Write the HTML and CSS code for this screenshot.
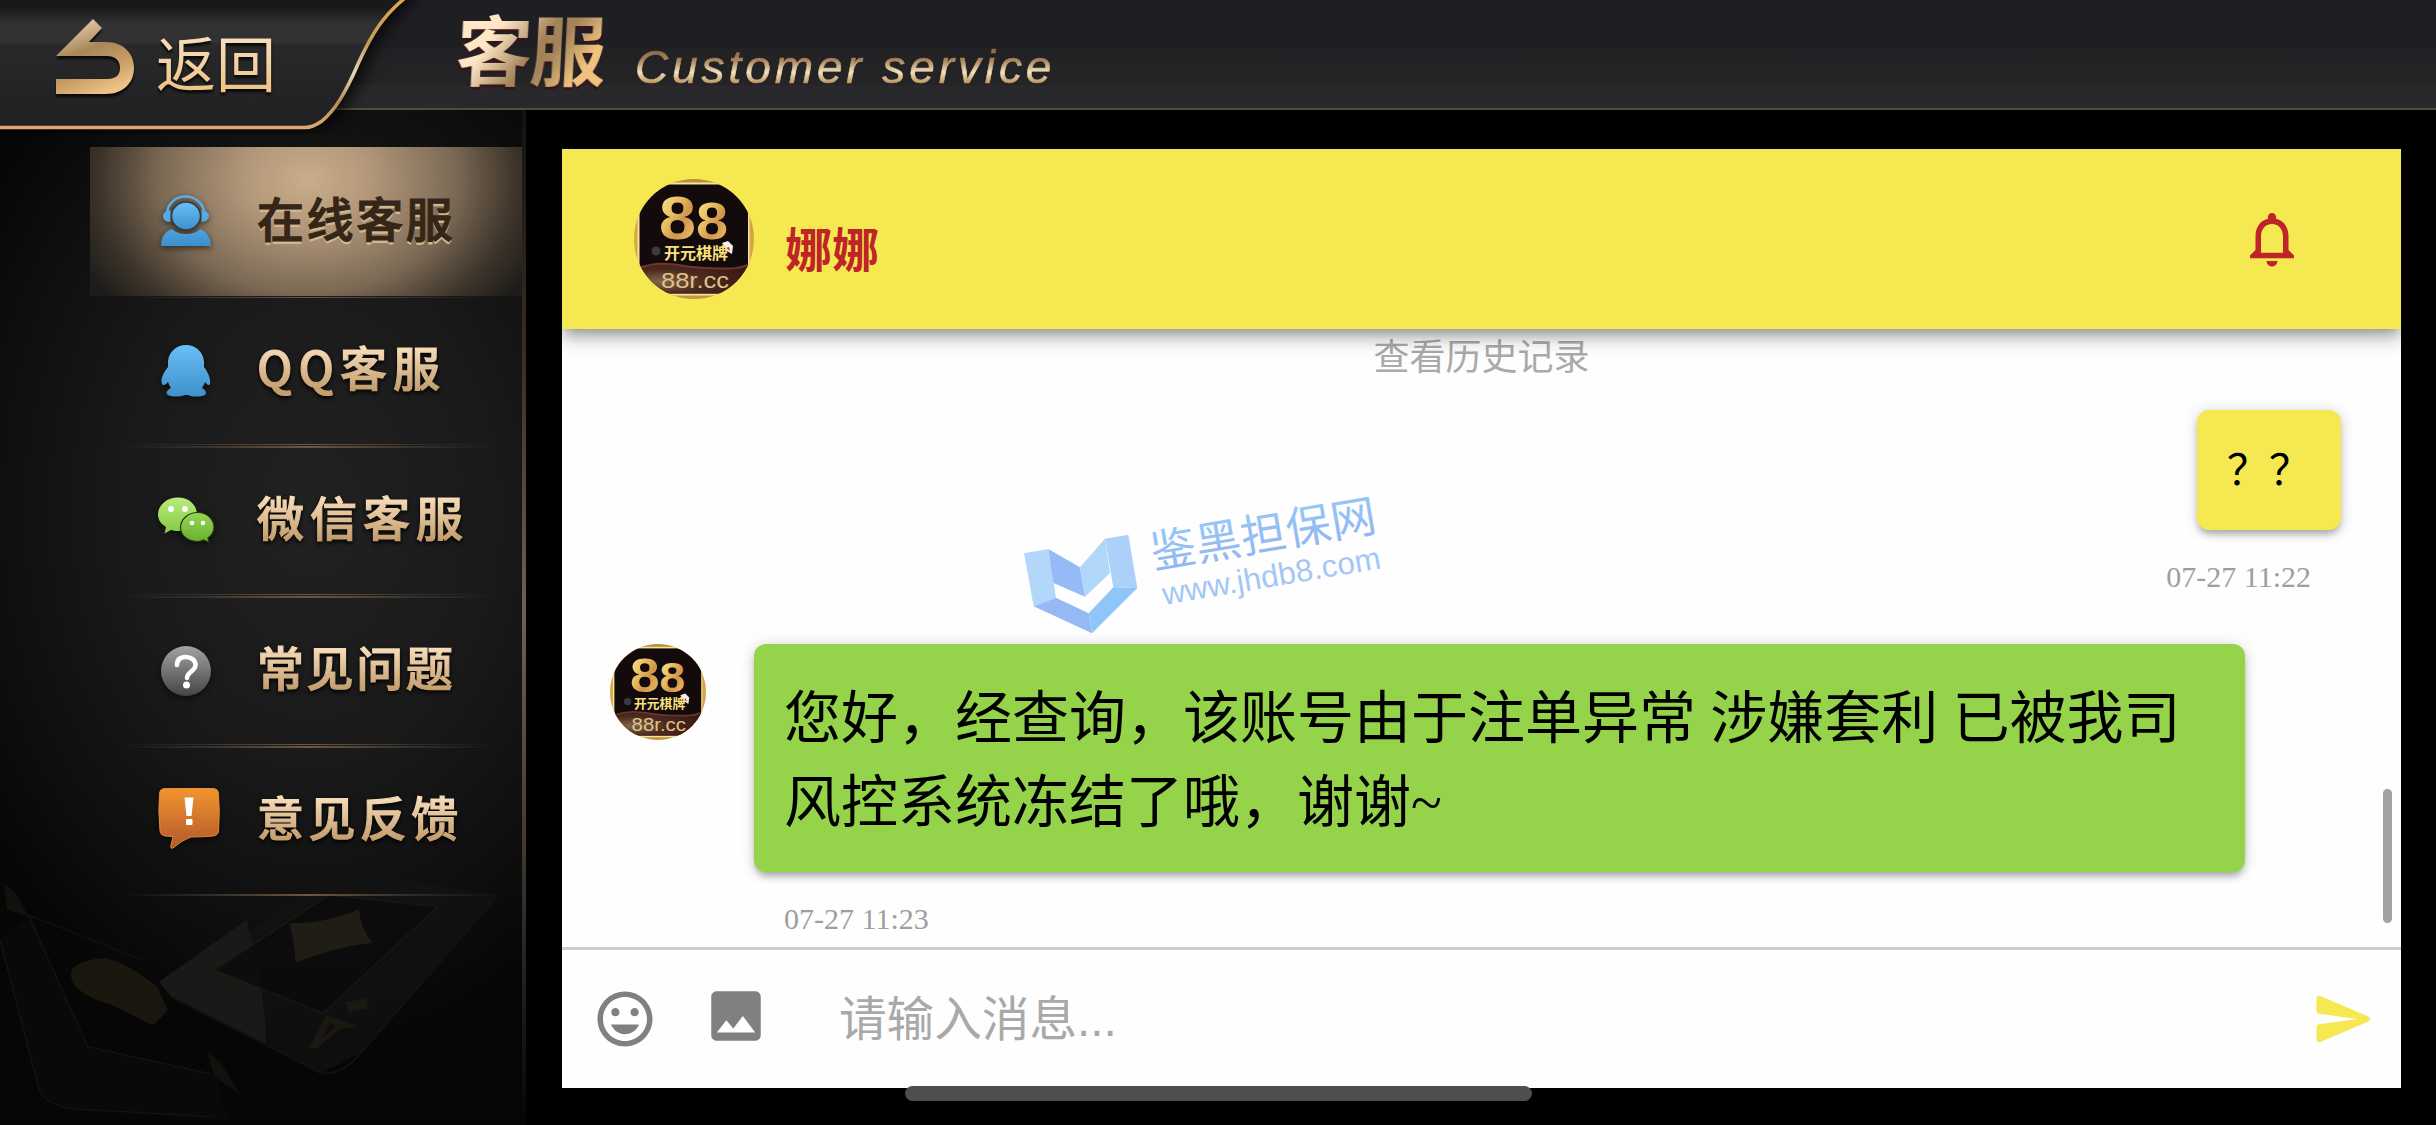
FILE: index.html
```
<!DOCTYPE html>
<html lang="zh-CN">
<head>
    <meta charset="UTF-8">
    <meta name="viewport" content="width=device-width, initial-scale=1.0">
    <title>客服</title>
    <link rel="stylesheet" href="styles.css">
</head>
<body>
    <!-- 公共渐变和头像 -->
    <svg class="defs" width="0" height="0">
        <defs>
            <linearGradient id="gold" x1="0" y1="0" x2="1" y2="1">
                <stop offset="0" stop-color="#fff0a0"/>
                <stop offset=".4" stop-color="#e8bd60"/>
                <stop offset=".6" stop-color="#d0954c"/>
                <stop offset="1" stop-color="#f6d074"/>
            </linearGradient>
            <linearGradient id="frame" x1="0" y1="0" x2="0" y2="1">
                <stop offset="0" stop-color="#b98d3a"/>
                <stop offset=".5" stop-color="#d9a846"/>
                <stop offset="1" stop-color="#c2963f"/>
            </linearGradient>
            <linearGradient id="blue" x1="0" y1="0" x2="0" y2="1">
                <stop offset="0" stop-color="#69bff7"/>
                <stop offset="1" stop-color="#3f8fcb"/>
            </linearGradient>
            <linearGradient id="blueBody" x1="0" y1="0" x2="0" y2="1">
                <stop offset="0" stop-color="#4fa3de"/>
                <stop offset="1" stop-color="#3d8ecb"/>
            </linearGradient>
            <radialGradient id="ground" cx=".2" cy=".6" r=".8">
                <stop offset="0" stop-color="#80674a"/>
                <stop offset=".5" stop-color="#4c2a1e"/>
                <stop offset="1" stop-color="#3a1b14"/>
            </radialGradient>
            <clipPath id="round"><circle cx="60" cy="60" r="60"/></clipPath>
        </defs>
        <symbol id="avatar" viewBox="0 0 120 120">
            <g clip-path="url(#round)">
                <rect width="120" height="120" fill="url(#frame)"/>
                <rect x="3.5" y="3.5" width="112" height="113" fill="#f8e39a"/>
                <rect x="5.5" y="5.5" width="108.5" height="109" fill="#120a0b"/>
                <path d="M5 89C30 80 45 88 72 89S104 90 114 86V114.500H5z" fill="url(#ground)"/>
                <path d="M5 89C30 80 45 88 72 89S104 90 114 86" fill="none" stroke="#71352f" stroke-width="2"/>
                <text class="av-num" x="25" y="59.500" font-size="61" textLength="37" lengthAdjust="spacingAndGlyphs" fill="url(#gold)">8</text>
                <text class="av-num" x="62" y="59.500" font-size="52" textLength="32" lengthAdjust="spacingAndGlyphs" fill="url(#gold)">8</text>
                <path d="M88 64l6-2 5 5-1 8-5-3z" fill="#f4f1ee"/>
                <path d="M92 69l3-1 1 4z" fill="#c33"/>
                <circle cx="22" cy="72" r="4.500" fill="#3b3b3d"/>
                <text class="av-name" x="30" y="80" font-size="16" fill="#fbe27d">开元棋牌</text>
                <text class="av-site" x="27" y="109" font-size="22" textLength="68" lengthAdjust="spacingAndGlyphs" fill="#e0c38a">88r.cc</text>
            </g>
        </symbol>
    </svg>

    <div class="app">
        <header class="topbar">
            <a class="back">
                <svg class="back-shape" width="430" height="134" viewBox="0 0 430 134">
                    <defs>
                        <linearGradient id="tab" x1="0" y1="0" x2="0" y2="1">
                            <stop offset="0" stop-color="#19191b"/>
                            <stop offset=".19" stop-color="#19191b"/>
                            <stop offset=".3" stop-color="#323233"/>
                            <stop offset=".42" stop-color="#323233"/>
                            <stop offset=".44" stop-color="#29292b"/>
                            <stop offset="1" stop-color="#202022"/>
                        </linearGradient>
                        <linearGradient id="tabLine" x1="0" y1="0" x2="0" y2="1">
                            <stop offset="0" stop-color="#d8a954"/>
                            <stop offset=".35" stop-color="#c79a58"/>
                            <stop offset=".58" stop-color="#e8d3b8"/>
                            <stop offset=".8" stop-color="#b98c5a"/>
                            <stop offset="1" stop-color="#dfa873"/>
                        </linearGradient>
                    </defs>
                    <path class="back-fill" d="M-20 127.500H304Q312 128 322 121C335 110 345 94 358 64C372 33 384 15 405-2V-20H-20z" fill="url(#tab)"/>
                    <path d="M-5 127.500H304Q312 128 322 121C335 110 345 94 358 64C372 33 384 15 405-2" fill="none" stroke="url(#tabLine)" stroke-width="3.500"/>
                </svg>
                <svg class="back-arrow" width="78" height="76" viewBox="0 0 78 76">
                    <defs>
                        <linearGradient id="arrow" x1=".2" y1="0" x2=".6" y2="1">
                            <stop offset="0" stop-color="#f0d6b8"/>
                            <stop offset=".42" stop-color="#a88758"/>
                            <stop offset=".7" stop-color="#c79c63"/>
                            <stop offset="1" stop-color="#efc487"/>
                        </linearGradient>
                    </defs>
                    <path d="M0 37L37 0L46 9L33 23H50C67 23 78 34 78 49S67 75 50 75H0V60H51C60 60 64 56 64 49S60 37 51 37z" fill="url(#arrow)"/>
                </svg>
                <span class="back-text gold-text">返回</span>
            </a>
            <h1 class="title">客服</h1>
            <span class="subtitle">Customer service</span>
        </header>

        <div class="main">
            <aside class="sidebar">
                <!-- 底部扑克牌暗纹 -->
                <svg class="cards" width="560" height="505" viewBox="0 0 1568 1515" preserveAspectRatio="none">
                    <path d="M480 1090L950 750L1395 825L1010 1300L900 1360L480 1130z" fill="#141414" opacity=".6"/>
                    <path d="M445 1085L690 900Q740 1080 745 1270L480 1130z" fill="#191918"/>
                    <path d="M600 1050L920 825L1225 860L905 1180z" fill="#0b0b0b" opacity=".8" stroke="#1d1a14" stroke-width="4"/>
                    <path d="M480 1130L900 1360Q960 1365 1010 1300L1395 825" fill="none" stroke="#15120f" stroke-width="5"/>
                    <path d="M810 910Q920 910 1005 868Q1010 930 1043 968Q940 980 828 1028Q825 960 810 910z" fill="#1f1d16"/>
                    <path d="M962 1145Q1000 1145 1028 1130Q1025 1155 1036 1168Q1000 1165 978 1180Q975 1160 962 1145z" fill="#1b1811"/>
                    <path d="M915 1185L1000 1218L950 1228L885 1287L866 1280zM925 1205L905 1250L940 1222z" fill="#1b1811" fill-rule="evenodd"/>
                    <path d="M0 960L80 885L240 1280L600 1365L640 1500L180 1470L110 1410z" fill="#0b0b0b" opacity=".7"/>
                    <path d="M0 960L110 1410Q130 1450 190 1465L590 1490M80 885L245 1280L590 1362M80 885L400 1020" fill="none" stroke="#17130d" stroke-width="4"/>
                    <path d="M200 1050Q230 1015 300 1015C370 1040 400 1070 440 1100L470 1170L430 1215C370 1190 330 1160 300 1150C240 1130 190 1100 200 1050z" fill="#1a170f"/>
                    <path d="M10 790L45 820L80 890L20 870zM580 1295L620 1330L670 1420L600 1370z" fill="#12100c"/>
                </svg>
                <nav class="menu">
                    <a class="item active">
                        <svg class="icon" width="60" height="60" viewBox="0 0 60 60">
                            <path d="M11 22C12 12 20 5.500 29.500 5.500S47 12 48.500 22" fill="none" stroke="#58aee8" stroke-width="2.500"/>
                            <path d="M14.500 19V31C9 31 7 28 7 25S10 19.500 14.500 19zM45.500 19V31C50 31 53 28 53 25S50 19.500 45.500 19z" fill="#55aae4"/>
                            <ellipse cx="30" cy="25" rx="14.500" ry="14" fill="url(#blue)" stroke="#3b3a38" stroke-width="1.500"/>
                            <path d="M5 55C5 45 10 40 16 38C20 42 25 43 30 43S40 42 44 38C50 40 55 46 55 55z" fill="url(#blueBody)"/>
                        </svg>
                        <span class="label">在线客服</span>
                    </a>
                    <a class="item wide">
                        <svg class="icon" width="60" height="60" viewBox="0 0 60 60">
                            <path d="M30 4C40 4 47 11 48 20V26C52 31 55 38 54 43C53 45 51 44 49 41C48 44 47 45 46 47C50 49 51 52 49 54C44 56 36 56 32 54H29C24 56 16 56 12 54C9 52 11 49 15 47C14 45 13 44 12 41C10 44 7 45 6 43C4 38 8 31 12 26V20C13 11 20 4 30 4z" fill="url(#blue)"/>
                        </svg>
                        <span class="label">QQ客服</span>
                    </a>
                    <a class="item wide">
                        <svg class="icon" width="60" height="60" viewBox="0 0 60 60">
                            <defs>
                                <linearGradient id="g1" x1="0" y1="0" x2="0" y2="1"><stop offset="0" stop-color="#b9ec7c"/><stop offset="1" stop-color="#84c83f"/></linearGradient>
                                <linearGradient id="g2" x1="0" y1="0" x2="0" y2="1"><stop offset="0" stop-color="#96d855"/><stop offset="1" stop-color="#6aac2d"/></linearGradient>
                            </defs>
                            <path d="M22 6.500C33 6.500 41 14 41 23.500S33 40 22 40C19 40 17 39.500 15 39L8.500 42.500L10 36C5 33 2 29 2 23.500C2 14 11 6.500 22 6.500z" fill="url(#g1)"/>
                            <path d="M41.500 21.500C51 21.500 58 28 58 36.500C58 41 55.500 44.500 52 47L53 51.500L47.500 49C45.500 50 43.500 50.500 41.500 50.500C32 50.500 24.500 44.500 24.500 36.500S32 21.500 41.500 21.500z" fill="url(#g2)" stroke="#24351a" stroke-width="1.200"/>
                            <g fill="#fff"><circle cx="15" cy="18" r="3"/><circle cx="29" cy="18" r="3"/><circle cx="36" cy="32" r="2.300"/><circle cx="47" cy="32" r="2.300"/></g>
                        </svg>
                        <span class="label">微信客服</span>
                    </a>
                    <a class="item">
                        <svg class="icon" width="60" height="60" viewBox="0 0 60 60">
                            <defs>
                                <linearGradient id="grey" x1="0" y1="0" x2="0" y2="1"><stop offset="0" stop-color="#a2a2a2"/><stop offset="1" stop-color="#454545"/></linearGradient>
                            </defs>
                            <circle cx="30" cy="30" r="25" fill="url(#grey)"/>
                            <path d="M21 24C21 18 25 16 30 16S39.500 19 39.500 24C39.500 30 31 31 31 37" fill="none" stroke="#fff" stroke-width="4.600" stroke-linecap="round"/>
                            <circle cx="30.500" cy="44" r="3.500" fill="#fff"/>
                        </svg>
                        <span class="label">常见问题</span>
                    </a>
                    <a class="item mid">
                        <svg class="icon" width="66" height="66" viewBox="3 4 66 66">
                            <defs>
                                <linearGradient id="orange" x1="0" y1="0" x2="0" y2="1"><stop offset="0" stop-color="#f3962f"/><stop offset="1" stop-color="#b2582c"/></linearGradient>
                            </defs>
                            <path d="M11 4.500Q36 2 61 4.500Q65 5 65.500 9Q67 28 65.500 47Q65 51.500 60 52Q49 53 38 53Q29 56 20 64Q17 65 18 61L20 52.500L12 52Q7.500 51.500 7 47Q5 28 6.500 9Q7 5 11 4.500z" fill="url(#orange)" stroke="#e08a2c" stroke-width="1"/>
                            <path d="M31.500 13.500H40.500L38.500 32H33.500z" fill="#fff"/>
                            <rect x="33" y="35" width="6.500" height="6" rx="1" fill="#fff"/>
                        </svg>
                        <span class="label">意见反馈</span>
                    </a>
                </nav>
            </aside>

            <section class="chat">
                <div class="chat-header">
                    <svg class="avatar-lg" width="120" height="120"><use href="#avatar"/></svg>
                    <span class="agent">娜娜</span>
                    <svg class="bell" width="66" height="66" viewBox="0 0 24 24">
                        <path d="M12 22c1.100 0 2-.9 2-2h-4c0 1.100.9 2 2 2zm6-6v-5c0-3.070-1.630-5.640-4.500-6.320V4c0-.83-.67-1.500-1.500-1.500s-1.500.67-1.500 1.500v.68C7.640 5.360 6 7.920 6 11v5l-2 2v1h16v-1l-2-2zm-2 1H8v-6c0-2.480 1.510-4.500 4-4.500s4 2.020 4 4.500v6z"/>
                    </svg>
                </div>

                <div class="messages">
                    <div class="history">查看历史记录</div>
                    <div class="msg mine">
                        <div class="bubble">？？</div>
                        <div class="time">07-27 11:22</div>
                    </div>
                    <div class="msg theirs">
                        <svg class="avatar-sm" width="96" height="96"><use href="#avatar"/></svg>
                        <div class="body">
                            <div class="bubble">您好，经查询，该账号由于注单异常 涉嫌套利 已被我司<br>风控系统冻结了哦，谢谢~</div>
                            <div class="time">07-27 11:23</div>
                        </div>
                    </div>
                    <div class="scrollbar"></div>

                    <svg class="watermark" width="440" height="180" viewBox="0 0 1320 540">
                        <defs>
                            <linearGradient id="wm" x1="0" y1="0" x2="0" y2="1"><stop offset="0" stop-color="#96cdf8"/><stop offset="1" stop-color="#92b2f2"/></linearGradient>
                        </defs>
                        <path d="M132 250L205 237L228 383L161 409z" fill="#b2d7fb"/>
                        <path d="M205 237L300 292L315 380L220 339z" fill="#95bbf6"/>
                        <path d="M300 292L375 206L390 309L315 380z" fill="#b0d6fa"/>
                        <path d="M375 206L445 194L472 354L400 352z" fill="#abd1fb"/>
                        <path d="M228 383L326 430L336 490L161 409z" fill="#94b9f5"/>
                        <path d="M326 430L400 352L472 354L336 490z" fill="#90c5fa"/>
                        <g transform="rotate(-9.600 525 305)">
                            <text class="wm-name" x="522" y="296" textLength="684" fill="url(#wm)">鉴黑担保网</text>
                            <text class="wm-site" x="536" y="408" textLength="662" fill="#a3c6f6">www.jhdb8.com</text>
                        </g>
                    </svg>
                </div>

                <div class="composer">
                    <svg class="tool" width="66" height="66" viewBox="0 0 24 24">
                        <path d="M11.990 2C6.470 2 2 6.480 2 12s4.470 10 9.990 10C17.520 22 22 17.520 22 12S17.520 2 11.990 2zM12 20c-4.420 0-8-3.580-8-8s3.580-8 8-8 8 3.580 8 8-3.580 8-8 8zm3.500-9c.83 0 1.500-.67 1.500-1.500S16.330 8 15.500 8 14 8.670 14 9.500s.67 1.500 1.500 1.500zm-7 0c.83 0 1.500-.67 1.500-1.500S9.330 8 8.500 8 7 8.670 7 9.500 7.670 11 8.500 11zm3.500 6.500c2.330 0 4.310-1.460 5.110-3.500H6.890c.8 2.040 2.780 3.500 5.110 3.500z"/>
                    </svg>
                    <svg class="tool photo" width="66" height="66" viewBox="0 0 24 24">
                        <path d="M21 19V5c0-1.100-.9-2-2-2H5c-1.100 0-2 .9-2 2v14c0 1.100.9 2 2 2h14c1.100 0 2-.9 2-2zM8.500 13.500l2.500 3.010L14.500 12l4.500 6H5l3.500-4.500z"/>
                    </svg>
                    <span class="placeholder">请输入消息...</span>
                    <svg class="send" width="66" height="66" viewBox="0 0 24 24">
                        <path d="M3.400 20.400l17.450-7.480c.81-.35.81-1.490 0-1.840L3.400 3.600c-.66-.29-1.390.2-1.390.91L2 9.120c0 .5.37.93.87.99L17 12 2.870 13.880c-.5.070-.87.5-.87 1l.010 4.610c0 .71.73 1.200 1.390.91z"/>
                    </svg>
                </div>
            </section>
        </div>
        <div class="home-indicator"></div>
    </div>
</body>
</html>
```

FILE: styles.css
```
* {
    box-sizing: border-box;
}
body {
    margin: 0;
    background: #000;
    font-family: "Liberation Sans", "Noto Sans CJK SC", sans-serif;
}
svg {
    display: block;
    flex: none;
}
.defs {
    position: absolute;
}
.app {
    position: relative;
    width: 2436px;
    height: 1125px;
    overflow: hidden;
    background: #000;
}

/* 顶部栏 */
.topbar {
    position: relative;
    z-index: 2;
    display: flex;
    height: 110px;
    background: linear-gradient(#1f1e23 0, #1f1e23 44%, #222224 46%, #242426 78%, #29292b 80%);
    border-bottom: 2px solid #574b3e;
}
.back {
    position: relative;
    display: flex;
    width: 456px;
    height: 128px;
    padding-left: 56px;
}
.back-shape {
    position: absolute;
    left: 0;
    top: 0;
}
.back-fill {
    filter: drop-shadow(8px 2px 8px rgba(0,0,0,0.8));
}
.back-arrow {
    position: relative;
    margin-top: 19px;
    filter: drop-shadow(0 3px 1px #0a0a0a);
}
.back-text {
    position: relative;
    margin: 35px 0 0 22px;
    font-size: 60px;
    line-height: 64px;
    height: 64px;
}
.gold-text {
    color: transparent;
    background: linear-gradient(#f8dfc0, #ecc07c);
    -webkit-background-clip: text;
    background-clip: text;
    filter: drop-shadow(0 3px 1px #0a0a0a);
}
.title {
    margin: 14px 0 0;
    font-size: 76px;
    line-height: 80px;
    height: 84px;
    font-weight: bold;
    letter-spacing: -2px;
    color: transparent;
    background: linear-gradient(125deg, #ffe6c6 25%, #a3845a 50%, #a3845a 60%, #f0c27f 80%);
    -webkit-background-clip: text;
    background-clip: text;
    transform: skewX(-3deg);
    filter: drop-shadow(0 3px 0 #35151a);
}
.subtitle {
    margin: 41px 0 0 31px;
    font-size: 46px;
    line-height: 52px;
    height: 56px;
    font-style: italic;
    letter-spacing: 3.9px;
    color: transparent;
    background: linear-gradient(#8a6744 15%, #ad845c 35%, #f2e3bd 56%, #a9793f 82%);
    -webkit-background-clip: text;
    background-clip: text;
    -webkit-text-stroke: 0.6px transparent;
}

.main {
    display: flex;
    height: 1015px;
}

/* 左侧菜单 */
.sidebar {
    position: relative;
    width: 526px;
    padding: 37px 0 0 90px;
    overflow: hidden;
    background: radial-gradient(ellipse 400px 540px at 310px 400px, #212122 0, #1a1a1b 45%, #0e0e0e 80%, #060606 100%);
}
.sidebar::after {
    content: "";
    position: absolute;
    top: 0;
    right: 0;
    width: 4px;
    height: 1000px;
    background: linear-gradient(#14120f, #3a2e22 25%, #6d6154 50%, #4c4239 68%, #1c1a18 90%, #080808);
}
.cards {
    position: absolute;
    left: 0;
    bottom: 0;
}
.menu {
    position: relative;
}
.item {
    position: relative;
    display: flex;
    align-items: center;
    height: 150px;
    padding: 0 0 2px 66px;
}
.item::after {
    content: "";
    position: absolute;
    left: 30px;
    right: 30px;
    bottom: -1px;
    height: 4px;
    background: linear-gradient(90deg, transparent, rgba(107,87,68,0.35) 22%, #6b5744 50%, rgba(107,87,68,0.35) 78%, transparent);
    clip-path: polygon(0 0, 100% 0, 100% 1px, 0 1px, 0 2px, 100% 2px, 100% 100%, 0 100%);
}
.item:last-child::after {
    bottom: 1px;
    height: 2px;
    clip-path: none;
}
.item.active::before {
    content: "";
    position: absolute;
    inset: 0 0 1px 0;
    background: radial-gradient(ellipse 58% 130% at 50% 22%, #c9ae8a 0, #b2977a 25%, #7c6a55 58%, #3e352b 82%, #1d1c1a 100%);
}
.item.active::after {
    bottom: -2px;
    height: 2px;
}
.icon {
    position: relative;
    filter: drop-shadow(0 2px 3px rgba(0,0,0,0.6));
}
.label {
    position: relative;
    margin-left: 41px;
    padding-bottom: 3px;
    margin-bottom: 8px;
    font-size: 47px;
    line-height: 60px;
    font-family: "Noto Sans CJK SC", sans-serif;
    font-weight: 500;
    letter-spacing: 2.6px;
    white-space: nowrap;
    color: transparent;
    background: linear-gradient(#fae0bd 15%, #c49e6d 85%);
    -webkit-background-clip: text;
    background-clip: text;
    -webkit-text-stroke: 1.2px transparent;
    filter: drop-shadow(0 2px 2px #000);
}
.wide .label {
    letter-spacing: 6px;
}
.mid .label {
    letter-spacing: 4.4px;
    margin-left: 35px;
}
.active .label {
    margin-bottom: 5px;
    color: #352618;
    background: none;
    -webkit-text-stroke: 1.2px #352618;
    text-shadow: 0 3px 0 #cdb98c;
    filter: none;
}

/* 聊天窗口 */
.chat {
    display: flex;
    flex-direction: column;
    width: 1839px;
    height: 939px;
    margin: 39px 0 0 36px;
    background: #fefefe;
}
.chat-header {
    position: relative;
    z-index: 1;
    display: flex;
    align-items: center;
    height: 180px;
    padding: 0 96px 0 72px;
    background: #f6e851;
    box-shadow: 0 6px 12px -3px rgba(0,0,0,0.3), 0 12px 15px rgba(0,0,0,0.14), 0 3px 30px rgba(0,0,0,0.1);
    clip-path: inset(0 0 -60px 0);
}
.av-num {
    font-family: "Liberation Sans", sans-serif;
    font-weight: bold;
}
.av-name {
    font-family: "Noto Sans CJK SC", sans-serif;
    font-weight: bold;
}
.av-site {
    font-family: "Liberation Sans", sans-serif;
}
.agent {
    margin: 23px 0 0 31px;
    font-size: 47px;
    line-height: 60px;
    font-weight: bold;
    color: #be2428;
}
.bell {
    margin-left: auto;
    fill: #be2428;
}
.messages {
    position: relative;
    height: 618px;
}
.history {
    height: 53px;
    padding-top: 3px;
    font-size: 36px;
    line-height: 52px;
    text-align: center;
    color: #aaa;
}
.bubble {
    border-radius: 12px;
    box-shadow: 0 6px 6px -2px rgba(0,0,0,0.22), 0 3px 12px rgba(0,0,0,0.14), 0 0 18px rgba(0,0,0,0.08);
    color: #000;
}
.time {
    font-family: "Liberation Serif", serif;
    font-size: 30px;
    line-height: 34px;
    color: #9e9ea2;
}
.mine {
    display: flex;
    flex-direction: column;
    align-items: flex-end;
    padding: 28px 60px 0 0;
}
.mine .bubble {
    width: 144px;
    height: 120px;
    padding-left: 30px;
    font-size: 42px;
    line-height: 114px;
    font-family: "Noto Sans CJK SC", sans-serif;
    background: #f6e851;
}
.mine .time {
    margin: 30px 30px 0 0;
}
.theirs {
    display: flex;
    padding: 50px 0 0 48px;
}
.theirs .body {
    margin-left: 48px;
}
.theirs .bubble {
    width: 1491px;
    height: 228px;
    padding: 33px 0 0 30px;
    font-family: "Liberation Serif", "Noto Sans CJK SC", serif;
    font-size: 57px;
    line-height: 84px;
    white-space: nowrap;
    background: #94d34a;
}
.theirs .time {
    margin: 30px 0 0 30px;
}
.scrollbar {
    position: absolute;
    right: 9px;
    bottom: 24px;
    width: 9px;
    height: 134px;
    border-radius: 5px;
    background: #a2a2a2;
}

/* 水印 */
.watermark {
    position: absolute;
    left: 418px;
    top: 141px;
}
.wm-name {
    font-family: "Noto Sans CJK SC", sans-serif;
    font-size: 136px;
    font-weight: 400;
}
.wm-site {
    font-family: "Liberation Sans", sans-serif;
    font-size: 94px;
}

/* 输入栏 */
.composer {
    display: flex;
    align-items: center;
    flex: 1;
    padding: 0 24px 0 30px;
    border-top: 3px solid #ccc;
}
.tool {
    fill: #808080;
}
.photo {
    margin: -6px 0 0 45px;
}
.placeholder {
    margin: 2px 0 0 70px;
    font-size: 47.6px;
    line-height: 60px;
    color: #a9a9a9;
}
.send {
    margin-left: auto;
    fill: #f6e851;
}
.home-indicator {
    position: absolute;
    left: 905px;
    top: 1086px;
    width: 627px;
    height: 15px;
    border-radius: 8px;
    background: #4e4e4e;
}
```
